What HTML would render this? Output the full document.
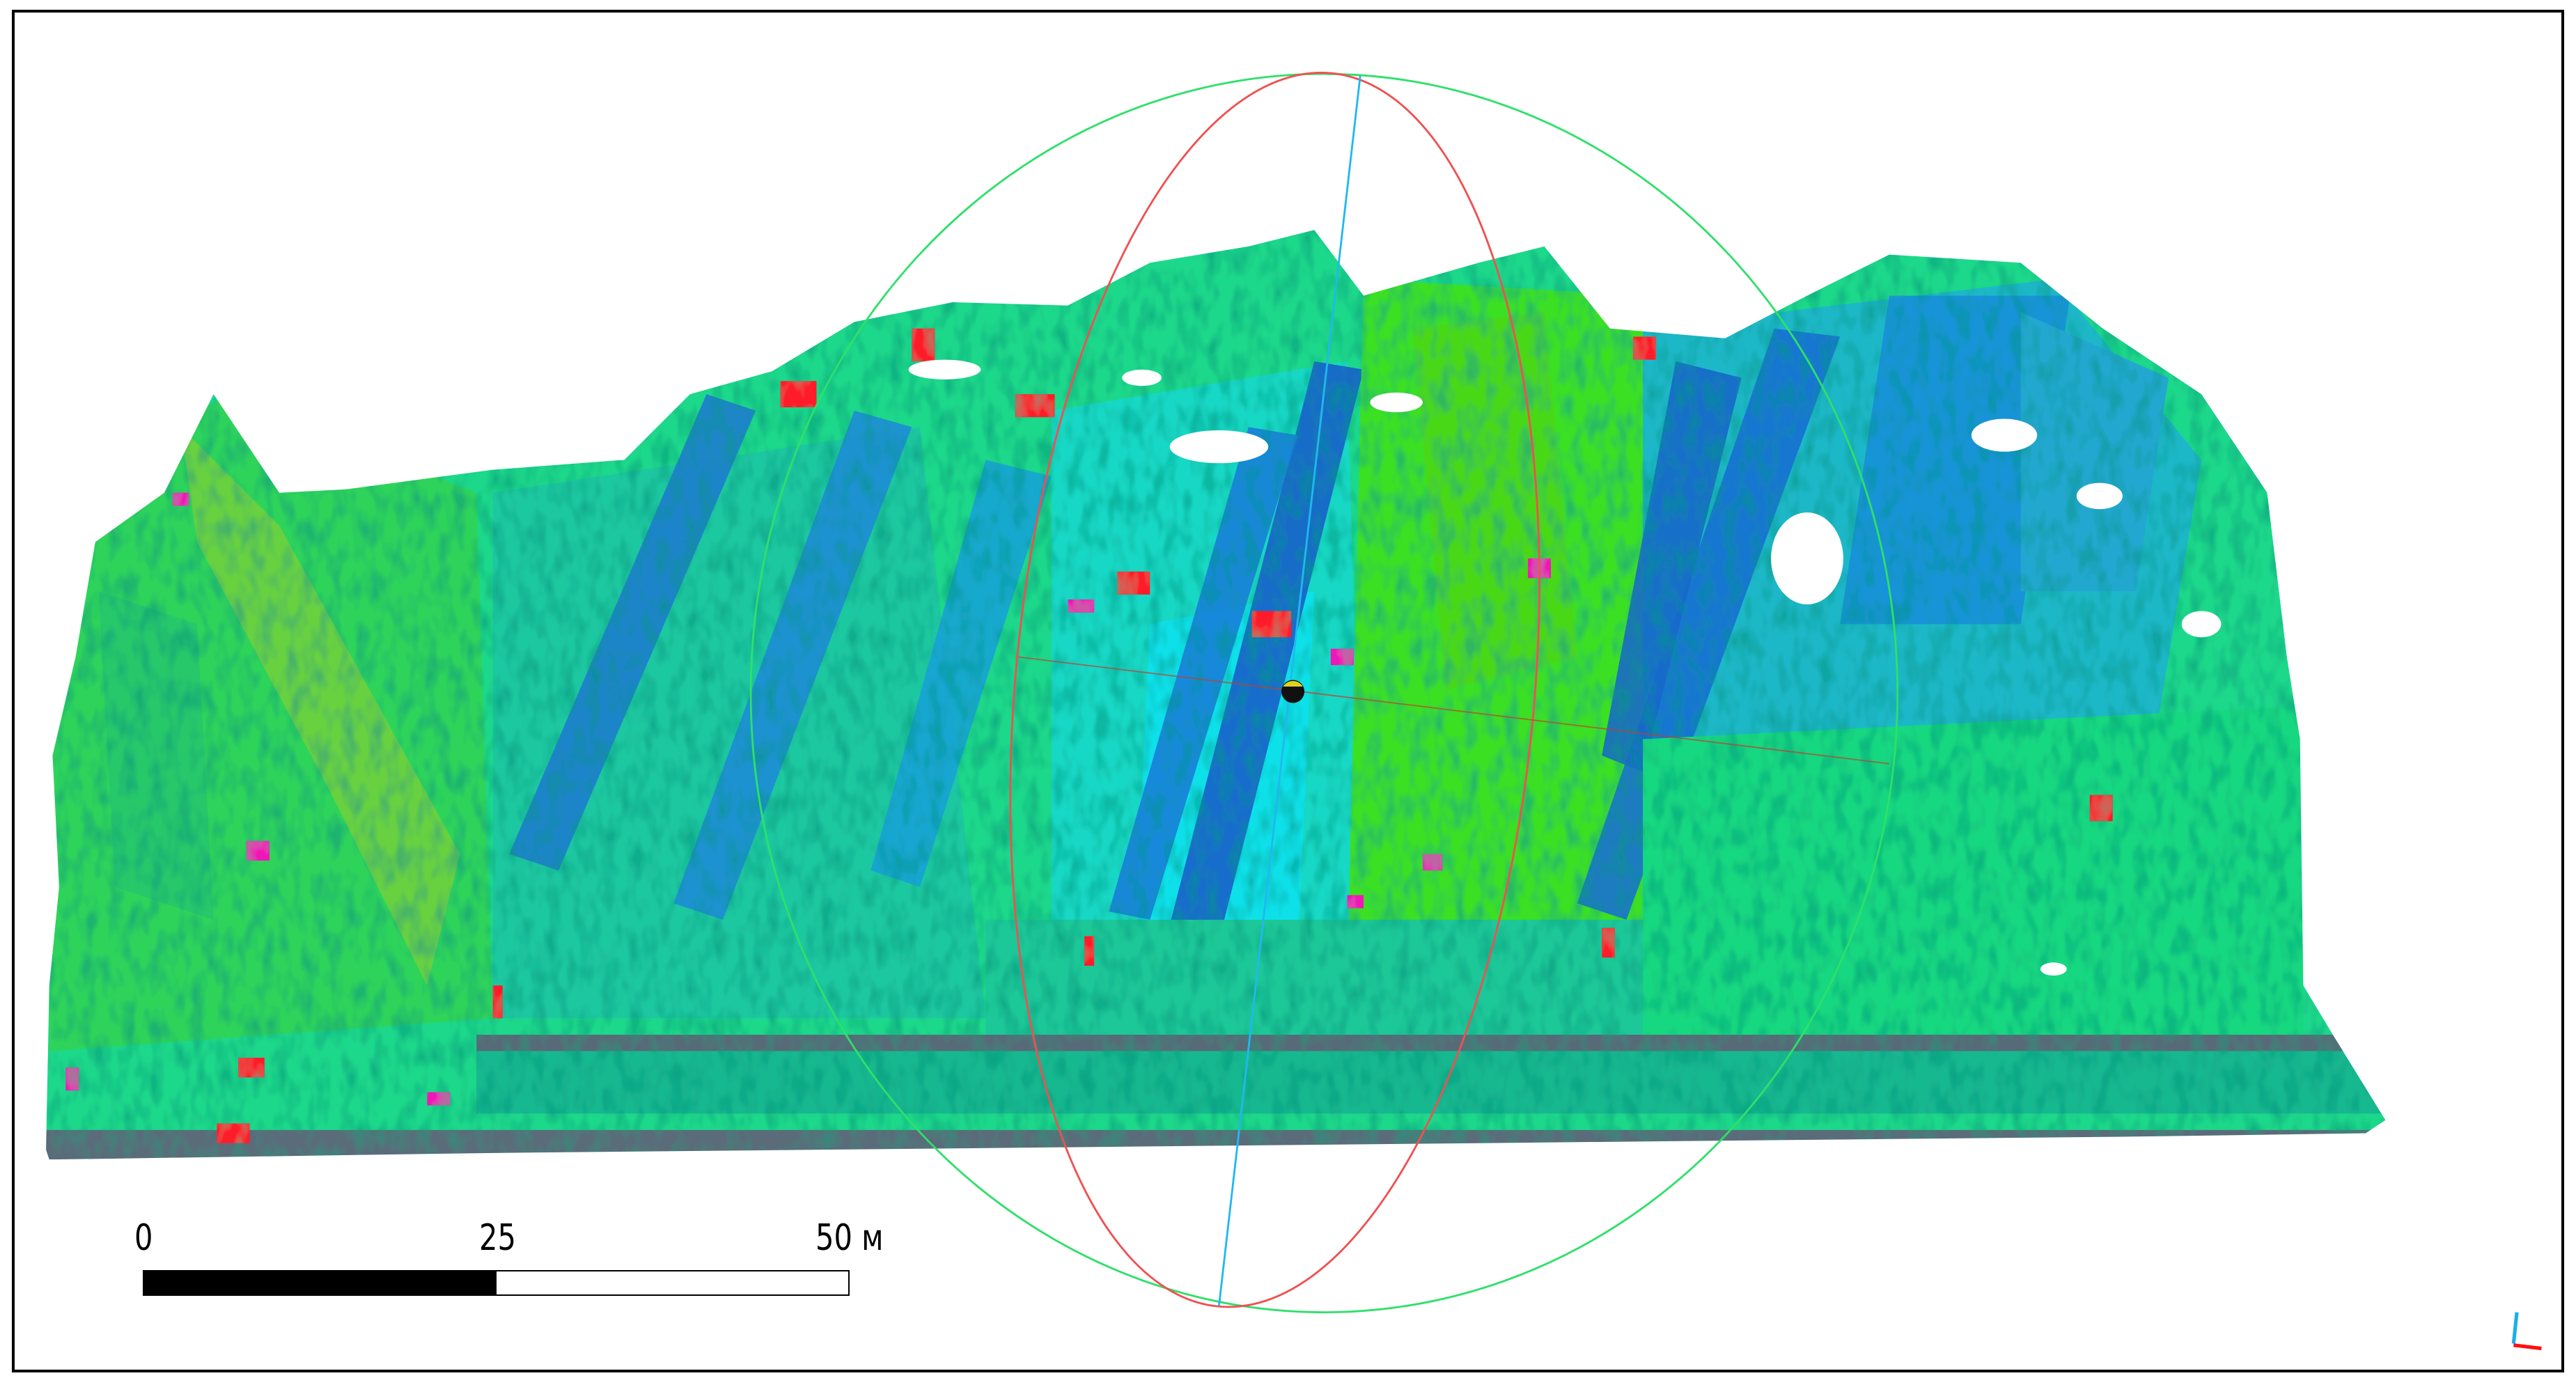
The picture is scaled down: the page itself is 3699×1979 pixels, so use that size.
<!DOCTYPE html>
<html><head><meta charset="utf-8"><style>
html,body{margin:0;padding:0;background:#fff;}
#w{position:relative;width:3699px;height:1979px;overflow:hidden;background:#fff;}
#frame{position:absolute;left:17px;top:14px;width:3657px;height:1949px;border:4px solid #000;box-sizing:content-box;}
svg{position:absolute;left:0;top:0;}
.t{position:absolute;font-family:"DejaVu Sans","Liberation Sans",sans-serif;font-size:52px;color:#000;transform:scaleX(0.8);transform-origin:left top;line-height:1;}
</style></head><body><div id="w">
<svg width="3699" height="1979" viewBox="0 0 1568 839" preserveAspectRatio="none">
<defs>
<filter id="tex" x="0" y="0" width="100%" height="100%">
<feTurbulence type="fractalNoise" baseFrequency="0.12 0.06" numOctaves="2" seed="3" result="n"/>
<feColorMatrix in="n" type="matrix" values="0 0 0 0 0  0 0 0 0 0.3  0 0 0 0 0.2  0 0 0 -2.5 1.5" result="m"/>
<feComposite in="m" in2="SourceGraphic" operator="in" result="c"/>
<feComponentTransfer in="c" result="c2"><feFuncA type="linear" slope="0.55"/></feComponentTransfer>
<feMerge><feMergeNode in="SourceGraphic"/><feMergeNode in="c2"/></feMerge>
</filter>
<clipPath id="cl"><path d="M28,700 L30,600 L36,540 L32,460 L46,400 L58,330 L100,300 L130,240 L170,300 L210,298 L300,286 L380,280 L420,240 L470,226 L520,196 L580,184 L650,186 L700,160 L760,150 L800,140 L830,180 L900,160 L940,150 L980,200 L1050,206 L1100,180 L1150,155 L1230,160 L1280,200 L1340,240 L1380,300 L1392,400 L1400,450 L1402,600 L1420,630 L1452,682 L1440,690 L1300,692 L900,696 L500,700 L300,702 L30,706 Z"/></clipPath>
</defs>
<g clip-path="url(#cl)" filter="url(#tex)">
<rect x="0" y="0" width="1568" height="839" fill="#1ed88a"/>
<path d="M30,300 L140,240 L290,300 L300,620 L30,640 Z" fill="#2ed45a"/>
<path d="M110,260 L170,320 L280,520 L260,600 L200,480 L120,330 Z" fill="#8fcf30" opacity="0.6"/>
<path d="M60,360 L120,380 L130,560 L70,540 Z" fill="#28c86a"/>
<path d="M300,300 L560,260 L600,620 L300,620 Z" fill="#1ec8a0"/>
<path d="M430,240 L460,250 L340,530 L310,520 Z" fill="#1a78d0" opacity="0.85"/>
<path d="M520,250 L555,260 L440,560 L410,550 Z" fill="#1a88d8" opacity="0.85"/>
<path d="M600,280 L640,290 L560,540 L530,530 Z" fill="#18a0d8" opacity="0.85"/>
<path d="M640,250 L820,220 L830,600 L640,600 Z" fill="#18d8c4"/>
<path d="M700,380 L800,360 L790,580 L690,590 Z" fill="#10e0e8"/>
<path d="M800,220 L830,225 L730,620 L700,610 Z" fill="#1560c8" opacity="0.9"/>
<path d="M760,260 L790,265 L700,560 L675,555 Z" fill="#1a80d8" opacity="0.9"/>
<path d="M830,170 L1000,180 L1010,580 L820,600 Z" fill="#3ae020"/>
<path d="M860,200 L940,190 L960,400 L880,420 Z" fill="#4ad818"/>
<path d="M1000,200 L1250,170 L1340,280 L1300,520 L1000,520 Z" fill="#1cb8c8"/>
<path d="M1080,200 L1120,205 L990,560 L960,550 Z" fill="#1a70d0" opacity="0.9"/>
<path d="M1150,180 L1260,180 L1230,380 L1120,380 Z" fill="#1a90d8" opacity="0.9"/>
<path d="M1230,190 L1320,230 L1300,360 L1230,360 Z" fill="#20a8d0"/>
<path d="M1020,220 L1060,230 L1000,470 L975,460 Z" fill="#1a68c8" opacity="0.9"/>
<path d="M1000,450 L1400,430 L1402,630 L1000,630 Z" fill="#16d880"/>
<path d="M600,560 L1000,560 L1000,640 L600,640 Z" fill="#1cc898"/>
<rect x="290" y="630" width="1160" height="10" fill="#566a78"/>
<rect x="290" y="640" width="1160" height="38" fill="#18b890"/>
<rect x="28" y="688" width="1430" height="18" fill="#5a6c7a"/>
<g fill="#ff1a2a">
<rect x="555" y="200" width="14" height="20"/><rect x="475" y="232" width="22" height="16"/><rect x="618" y="240" width="24" height="14"/>
<rect x="680" y="348" width="20" height="14"/><rect x="762" y="372" width="24" height="16"/><rect x="1272" y="484" width="14" height="16"/>
<rect x="145" y="644" width="16" height="12"/><rect x="132" y="684" width="20" height="12"/><rect x="660" y="570" width="6" height="18"/>
<rect x="975" y="565" width="8" height="18"/><rect x="994" y="205" width="14" height="14"/><rect x="300" y="600" width="6" height="20"/>
</g>
<g fill="#f018b8">
<rect x="150" y="512" width="14" height="12"/><rect x="260" y="665" width="14" height="8"/><rect x="650" y="365" width="16" height="8"/>
<rect x="930" y="340" width="14" height="12"/><rect x="820" y="545" width="10" height="8"/><rect x="105" y="300" width="10" height="8"/>
<rect x="866" y="520" width="12" height="10"/><rect x="40" y="650" width="8" height="14"/><rect x="810" y="395" width="14" height="10"/>
</g>
</g>
<g fill="#fff">
<ellipse cx="575" cy="225" rx="22" ry="6"/><ellipse cx="742" cy="272" rx="30" ry="10"/><ellipse cx="1278" cy="302" rx="14" ry="8"/>
<ellipse cx="1100" cy="340" rx="22" ry="28"/><ellipse cx="1220" cy="265" rx="20" ry="10"/><ellipse cx="850" cy="245" rx="16" ry="6"/>
<ellipse cx="1340" cy="380" rx="12" ry="8"/><ellipse cx="1250" cy="590" rx="8" ry="4"/><ellipse cx="695" cy="230" rx="12" ry="5"/>
</g>
<ellipse cx="806" cy="422" rx="349" ry="377" fill="none" stroke="#2ee06a" stroke-width="1.2"/>
<ellipse cx="776" cy="420" rx="158" ry="377" transform="rotate(5.2 776 420)" fill="none" stroke="#f05050" stroke-width="1.2"/>
<line x1="828" y1="46" x2="742" y2="795" stroke="#20b8f0" stroke-width="1.2"/>
<line x1="620" y1="400" x2="1150" y2="465" stroke="#c04030" stroke-width="0.8" opacity="0.7"/>
<circle cx="787" cy="421" r="7" fill="#111"/>
<path d="M781,418 a7,7 0 0 1 12,0 z" fill="#e0d020"/>
<line x1="1532" y1="799" x2="1530" y2="818" stroke="#1ab0e8" stroke-width="2.2"/>
<line x1="1530" y1="819" x2="1547" y2="821" stroke="#ff1010" stroke-width="2.2"/>
</svg>
<div id="frame"></div>
<div style="position:absolute;left:205px;top:1824px;width:508px;height:37px;background:#000;"></div>
<div style="position:absolute;left:713px;top:1824px;width:505px;height:33px;border:2px solid #000;border-left:none;background:#fff;"></div>
<div class="t" style="left:193px;top:1752px;">0</div>
<div class="t" style="left:688px;top:1752px;">25</div>
<div class="t" style="left:1171px;top:1752px;">50 м</div>
</div></body></html>
